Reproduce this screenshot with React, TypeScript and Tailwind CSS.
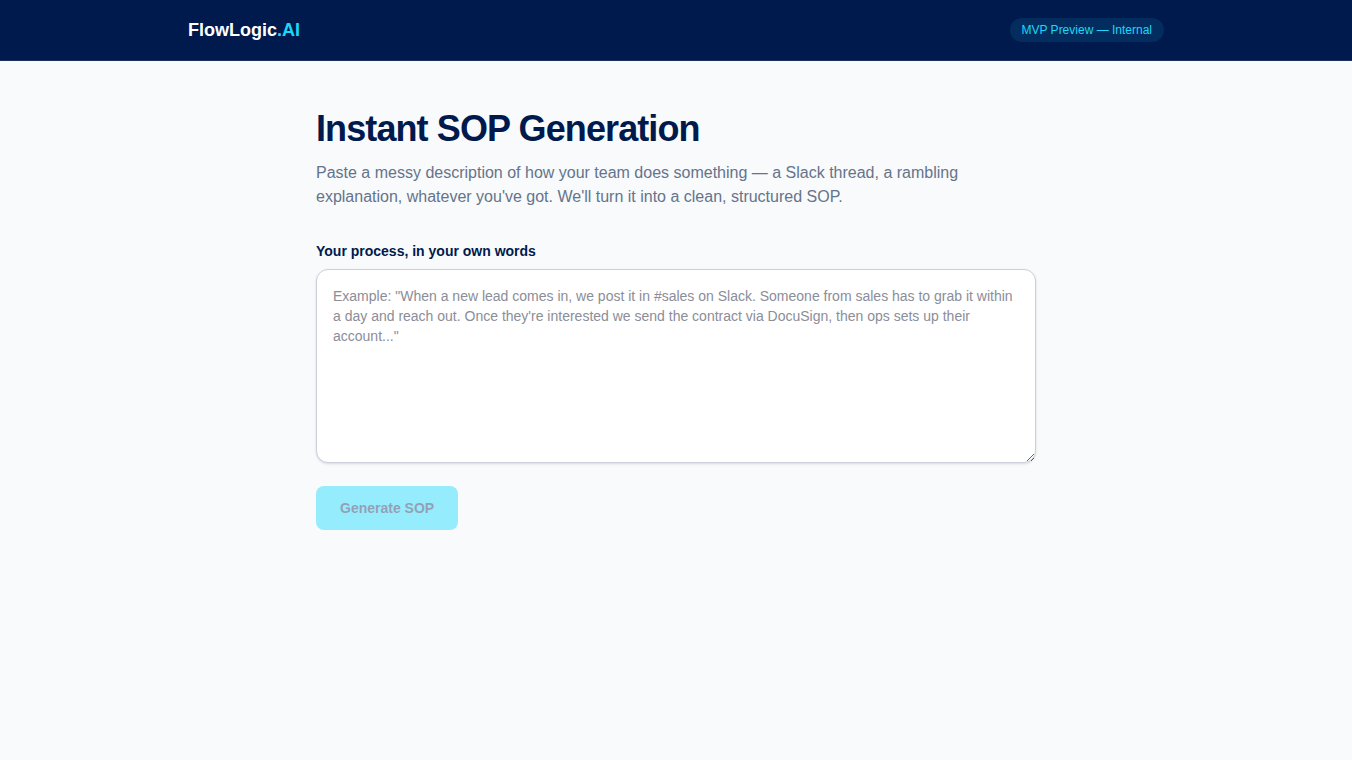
export default function App() {
  return (
    <div className="min-h-screen bg-[#f9fafc] font-['Liberation_Sans',Arial,sans-serif] text-[#001a4d]">
      <header className="border-b border-white/10 bg-[#001a4d]">
        <div className="mx-auto flex max-w-5xl items-center justify-between px-6 py-4">
          <a href="#" className="text-lg font-bold text-white">
            FlowLogic<span className="text-[#1cd6fb]">.AI</span>
          </a>
          <span className="rounded-full bg-[#1cd6fb]/10 px-3 py-1 text-xs text-[#1cd6fb]">
            MVP Preview — Internal
          </span>
        </div>
      </header>
      <main className="mx-auto max-w-3xl px-6 py-12">
        <h1 className="text-4xl font-bold tracking-tight">Instant SOP Generation</h1>
        <p className="mt-3 text-base text-[#64748b]">
          Paste a messy description of how your team does something — a Slack thread, a rambling
          explanation, whatever you've got. We'll turn it into a clean, structured SOP.
        </p>
        <form className="mt-8" onSubmit={(event) => event.preventDefault()}>
          <label htmlFor="process" className="mb-2 block text-sm font-semibold">
            Your process, in your own words
          </label>
          <div>
            <textarea
              id="process"
              rows={8}
              className="w-full resize-y rounded-xl border border-[#cccfdb] bg-white p-4 text-sm shadow-sm placeholder:text-[#8b8d98]"
              placeholder={`Example: "When a new lead comes in, we post it in #sales on Slack. Someone from sales has to grab it within a day and reach out. Once they're interested we send the contract via DocuSign, then ops sets up their account..."`}
            />
          </div>
          <button
            type="submit"
            disabled
            className="mt-4 rounded-lg bg-[#00d9ff] px-6 py-3 text-sm font-semibold opacity-40"
          >
            Generate SOP
          </button>
        </form>
      </main>
    </div>
  );
}
